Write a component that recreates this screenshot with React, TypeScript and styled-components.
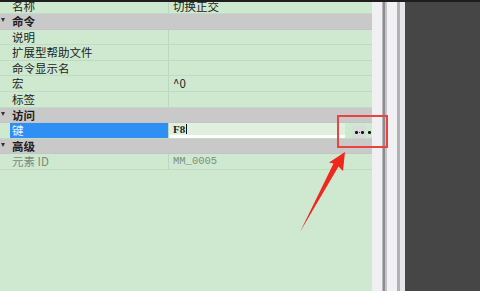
import React from "react";
import styled, { createGlobalStyle } from "styled-components";

const GlobalStyle = createGlobalStyle`
  html, body {
    margin: 0;
    padding: 0;
    width: 480px;
    height: 291px;
    overflow: hidden;
    background: #cfe9d1;
  }
  body {
    font-family: "Noto Sans CJK SC", "Liberation Sans", sans-serif;
  }
`;

const Screen = styled.div`
  position: relative;
  width: 480px;
  height: 291px;
  display: flex;
  flex-direction: column;
  overflow: hidden;
`;

const TopEdge = styled.div`
  height: 2px;
  background: #1e1e1e;
  flex-shrink: 0;
`;

const Body = styled.div`
  flex: 1;
  display: flex;
  min-height: 0;
`;

const Grid = styled.div`
  width: 372px;
  background: #cfe9d1;
  overflow: hidden;
`;

const Rows = styled.div`
  margin-top: -3.5px;
  display: flex;
  flex-direction: column;
`;

const Row = styled.div<{ $category?: boolean; $blank?: boolean }>`
  height: 15.6px;
  box-sizing: border-box;
  display: grid;
  grid-template-columns: 10px 158px 1fr;
  align-items: stretch;
  border-bottom: ${(p) =>
    p.$blank ? "none" : `1px solid ${p.$category ? "#c4c4c4" : "#bfdcc1"}`};
  background: ${(p) => (p.$category ? "#c9c9c9" : "#cfe9d1")};
  font-size: 11.5px;
  line-height: 14.6px;
  color: #1d1d1d;
`;

const Gutter = styled.div`
  display: flex;
  align-items: center;
  justify-content: center;
`;

const Caret = styled.span`
  width: 0;
  height: 0;
  border-left: 2.5px solid transparent;
  border-right: 2.5px solid transparent;
  border-top: 4px solid #333;
  margin-left: -5px;
  margin-top: -2px;
`;

const Label = styled.div<{ $bold?: boolean; $selected?: boolean; $muted?: boolean }>`
  padding-left: 2px;
  font-weight: ${(p) => (p.$bold ? 700 : 400)};
  background: ${(p) => (p.$selected ? "#2f8ff2" : "transparent")};
  color: ${(p) => (p.$selected ? "#eaf4ff" : p.$muted ? "#7a8a7c" : "#1d1d1d")};
  white-space: nowrap;
`;

const Value = styled.div<{ $muted?: boolean; $mono?: boolean }>`
  padding-left: 4px;
  border-left: 1px solid #bcd8be;
  color: ${(p) => (p.$muted ? "#7d8f80" : "#222")};
  font-family: ${(p) =>
    p.$mono ? '"Liberation Mono", "DejaVu Sans Mono", monospace' : "inherit"};
  font-size: ${(p) => (p.$mono ? "10.5px" : "inherit")};
  white-space: nowrap;
`;

const KeyValue = styled.div`
  display: flex;
  align-items: stretch;
  border-left: 1px solid #bcd8be;
`;

const KeyInput = styled.div`
  flex: 1;
  background: #dff0df;
  border-bottom: 3px solid #ffffff;
  padding-left: 4px;
  font-family: "Liberation Serif", "DejaVu Serif", serif;
  font-weight: 700;
  font-size: 11px;
  line-height: 12px;
  color: #222;
  display: flex;
  align-items: center;
`;

const Cursor = styled.span`
  display: inline-block;
  width: 1px;
  height: 10px;
  background: #111;
  margin-left: 1px;
`;

const EllipsisButton = styled.div`
  width: 13px;
  margin: 3px 0 0 8px;
  background: #dadada;
  display: flex;
  align-items: center;
  justify-content: center;
  gap: 1px;
`;

const Dot = styled.span<{ $size: number }>`
  width: ${(p) => p.$size}px;
  height: ${(p) => p.$size}px;
  background: #111;
  border-radius: 50%;
`;

const TrailDot = styled.div`
  width: 3px;
  display: flex;
  align-items: center;
  justify-content: center;
  margin: 3px 1px 0 2px;
  &::after {
    content: "";
    width: 2.5px;
    height: 2.5px;
    border-radius: 50%;
    background: #111;
  }
`;

const Scroller = styled.div`
  width: 33px;
  display: flex;
  background: #eeeef1;
`;

const Strip = styled.div<{ $w: number; $c: string }>`
  width: ${(p) => p.$w}px;
  background: ${(p) => p.$c};
`;

const DarkPanel = styled.div`
  flex: 1;
  background: #464646;
`;

const Highlight = styled.div`
  position: absolute;
  left: 337px;
  top: 115px;
  width: 51px;
  height: 33px;
  box-sizing: border-box;
  border: 2px solid #ea4440;
`;

const Arrow = styled.svg`
  position: absolute;
  left: 0;
  top: 0;
  pointer-events: none;
`;

type Item = {
  label: string;
  value?: string;
  kind?: "category" | "key" | "muted";
  mono?: boolean;
};

const items: Item[] = [
  { label: "名称", value: "切换正交" },
  { label: "命令", kind: "category" },
  { label: "说明", value: "" },
  { label: "扩展型帮助文件", value: "" },
  { label: "命令显示名", value: "" },
  { label: "宏", value: "^0" },
  { label: "标签", value: "" },
  { label: "访问", kind: "category" },
  { label: "键", kind: "key" },
  { label: "高级", kind: "category" },
  { label: "元素 ID", value: "MM_0005", kind: "muted", mono: true },
];

const blanks = Array.from({ length: 8 });

const App: React.FC = () => {
  return (
    <>
      <GlobalStyle />
      <Screen>
        <TopEdge />
        <Body>
          <Grid>
            <Rows>
              {items.map((it, i) => {
                if (it.kind === "category") {
                  return (
                    <Row key={i} $category>
                      <Gutter>
                        <Caret />
                      </Gutter>
                      <Label $bold>{it.label}</Label>
                      <div />
                    </Row>
                  );
                }
                if (it.kind === "key") {
                  return (
                    <Row key={i}>
                      <Gutter />
                      <Label $selected>{it.label}</Label>
                      <KeyValue>
                        <KeyInput>
                          F8
                          <Cursor />
                        </KeyInput>
                        <EllipsisButton>
                          <Dot $size={2.5} />
                          <Dot $size={1.5} />
                          <Dot $size={2.5} />
                        </EllipsisButton>
                        <TrailDot />
                      </KeyValue>
                    </Row>
                  );
                }
                return (
                  <Row key={i}>
                    <Gutter />
                    <Label $muted={it.kind === "muted"}>{it.label}</Label>
                    <Value $muted={it.kind === "muted"} $mono={it.mono}>
                      {it.value}
                    </Value>
                  </Row>
                );
              })}
              {blanks.map((_, i) => (
                <Row key={"b" + i} $blank>
                  <Gutter />
                  <div />
                  <div />
                </Row>
              ))}
            </Rows>
          </Grid>
          <Scroller>
            <Strip $w={10} $c="#f0f0f3" />
            <Strip $w={1} $c="#b8b8bc" />
            <Strip $w={2} $c="#8c8c90" />
            <Strip $w={2} $c="#c4c4c8" />
            <Strip $w={10} $c="#f1f1f4" />
            <Strip $w={3} $c="#b2b2b6" />
            <Strip $w={5} $c="#e6e6ea" />
          </Scroller>
          <DarkPanel />
        </Body>
        <Highlight />
        <Arrow width="480" height="291" viewBox="0 0 480 291">
          <polygon
            points="345,152 343,171 338.5,166.5 300,232 333.5,163.5 329,162.5"
            fill="#f0271c"
          />
        </Arrow>
      </Screen>
    </>
  );
};

export default App;
